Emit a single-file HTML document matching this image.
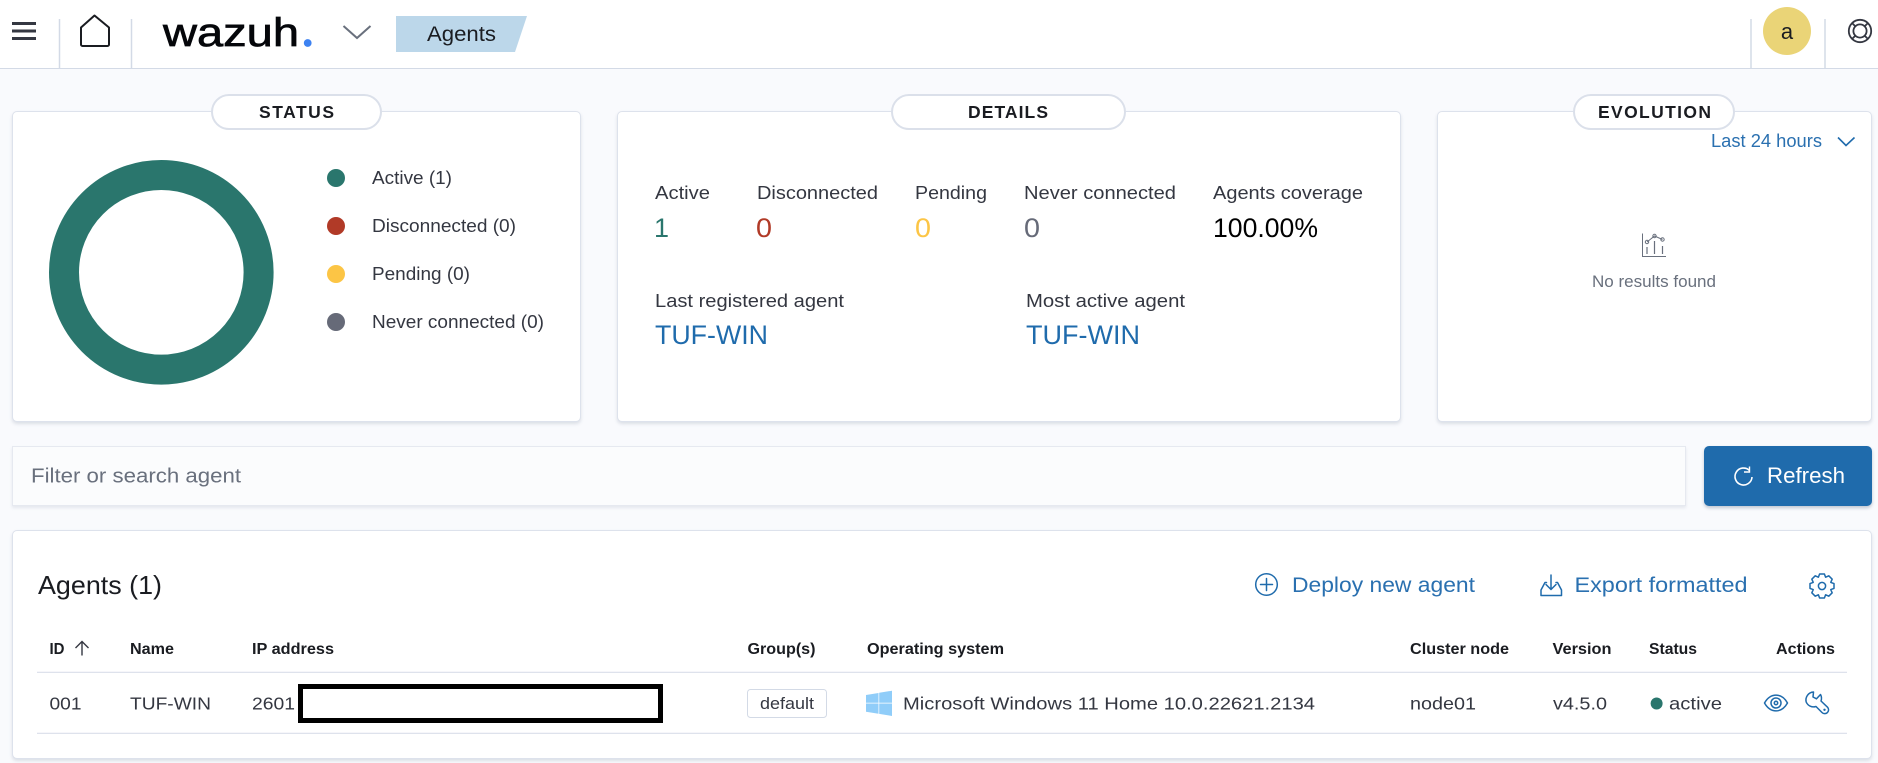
<!DOCTYPE html>
<html lang="en"><head><meta charset="utf-8"><title>Agents - Wazuh</title>
<style>
html,body{margin:0;padding:0;width:1878px;height:763px;overflow:hidden;background:#f9fafd;font-family:"Liberation Sans",sans-serif}
.hd{position:absolute;left:0;top:0;width:1878px;height:68px;background:#fff;border-bottom:1px solid #d3dae6}
.p{position:absolute;background:#fff;border:1px solid #dde2ec;border-radius:5px;box-shadow:0 2px 3px rgba(152,162,179,.3);box-sizing:border-box}
.inp{position:absolute;left:12px;top:446px;width:1674px;height:60px;background:#fbfcfd;border:1px solid #e6e9f0;box-shadow:0 2px 3px rgba(152,162,179,.2);box-sizing:border-box}
.btn{position:absolute;left:1704px;top:446px;width:168px;height:60px;background:#1f6bac;border-radius:5px;box-shadow:0 2px 3px rgba(60,80,110,.3)}
svg{position:absolute;left:0;top:0}
text{font-family:"Liberation Sans",sans-serif;fill:#343741}
.l{font-size:18.5px}
.v{font-size:27px}
.h{font-size:15.500px;font-weight:700;fill:#1a1c21}
.r{font-size:17.500px}
.t{font-size:17.500px;font-weight:700;fill:#1a1c21}
.a{font-size:21px;fill:#2a70b0}
.i{fill:none;stroke:#1f6bac;stroke-width:1.5;stroke-linecap:round;stroke-linejoin:round}
.pill{fill:#fff;stroke:#dbe0ea;stroke-width:2}
.sep{stroke:#d3dae6;stroke-width:1.5}
.ln{stroke:#d9deea;stroke-width:1.2}
</style></head><body>
<div class="hd"></div>
<div class="p" style="left:12px;top:111px;width:569px;height:311px"></div>
<div class="p" style="left:617px;top:111px;width:784px;height:311px"></div>
<div class="p" style="left:1437px;top:111px;width:435px;height:311px"></div>
<div class="inp"></div>
<div class="btn"></div>
<div class="p" style="left:12px;top:530px;width:1860px;height:229px"></div>

<svg width="1878" height="763" viewBox="0 0 1878 763">
<!-- header -->
<rect x="12" y="22" width="24" height="3" fill="#343741"/><rect x="12" y="29.5" width="24" height="3" fill="#343741"/><rect x="12" y="37" width="24" height="3" fill="#343741"/>
<line class="sep" x1="59.5" y1="19" x2="59.5" y2="68"/>
<path d="M81 27.5 94.5 15.5 109 27.5V44.5a1.5 1.5 0 0 1-1.5 1.5H82.500a1.500 1.500 0 0 1-1.500-1.500Z" fill="none" stroke="#1a1c21" stroke-width="2" stroke-linejoin="round"/>
<line class="sep" x1="131.500" y1="19" x2="131.500" y2="68"/>
<text x="163" y="46" font-size="40" textLength="136" lengthAdjust="spacingAndGlyphs" style="fill:#05060a;stroke:#05060a;stroke-width:.7">wazuh</text>
<circle cx="307.700" cy="43" r="3.900" fill="#3d82f1"/>
<path d="M343.500 26 357 38 370.500 26" fill="none" stroke="#69707d" stroke-width="2"/>
<polygon points="396,16 527,16 515,52 396,52" fill="#bcd7ea"/>
<text x="427" y="41" font-size="21" textLength="69" lengthAdjust="spacingAndGlyphs" style="fill:#1a1c21">Agents</text>
<line class="sep" x1="1751" y1="19" x2="1751" y2="68"/>
<circle cx="1787" cy="31" r="24" fill="#ead477"/>
<text x="1787" y="39" font-size="22" text-anchor="middle" style="fill:#1a1c21">a</text>
<line class="sep" x1="1825" y1="19" x2="1825" y2="68"/>
<g fill="none" stroke="#343741" stroke-width="1.800"><circle cx="1860" cy="31" r="11.200"/><circle cx="1860" cy="31" r="6.600"/><path d="M1852 23l3.300 3.300M1868 23l-3.300 3.300M1852 39l3.300-3.300M1868 39l-3.300-3.300"/></g>

<!-- status -->
<rect class="pill" x="212" y="95" width="169" height="34" rx="17"/>
<text class="t" x="259" y="118" textLength="75" lengthAdjust="spacing">STATUS</text>
<circle cx="161.300" cy="272.300" r="97.300" fill="none" stroke="#2a766d" stroke-width="30"/>
<circle cx="336" cy="178" r="9" fill="#2a766d"/><text class="l" x="372" y="184" textLength="80" lengthAdjust="spacingAndGlyphs">Active (1)</text>
<circle cx="336" cy="226" r="9" fill="#b13a27"/><text class="l" x="372" y="232" textLength="144" lengthAdjust="spacingAndGlyphs">Disconnected (0)</text>
<circle cx="336" cy="274" r="9" fill="#fcc545"/><text class="l" x="372" y="280" textLength="98" lengthAdjust="spacingAndGlyphs">Pending (0)</text>
<circle cx="336" cy="322" r="9" fill="#666a78"/><text class="l" x="372" y="328" textLength="172" lengthAdjust="spacingAndGlyphs">Never connected (0)</text>

<!-- details -->
<rect class="pill" x="892" y="95" width="233" height="34" rx="17"/>
<text class="t" x="968" y="118" textLength="80" lengthAdjust="spacing">DETAILS</text>
<text class="l" x="655" y="199" textLength="55" lengthAdjust="spacingAndGlyphs">Active</text>
<text class="l" x="757" y="199" textLength="121" lengthAdjust="spacingAndGlyphs">Disconnected</text>
<text class="l" x="915" y="199" textLength="72" lengthAdjust="spacingAndGlyphs">Pending</text>
<text class="l" x="1024" y="199" textLength="152" lengthAdjust="spacingAndGlyphs">Never connected</text>
<text class="l" x="1213" y="199" textLength="150" lengthAdjust="spacingAndGlyphs">Agents coverage</text>
<text class="v" x="654" y="237" style="fill:#2a766d">1</text>
<text class="v" x="756" y="237" style="fill:#b13a27" textLength="16" lengthAdjust="spacingAndGlyphs">0</text>
<text class="v" x="915" y="237" style="fill:#fcc545" textLength="16" lengthAdjust="spacingAndGlyphs">0</text>
<text class="v" x="1024" y="237" style="fill:#666a78" textLength="16" lengthAdjust="spacingAndGlyphs">0</text>
<text class="v" x="1213" y="237" style="fill:#000" textLength="105" lengthAdjust="spacingAndGlyphs">100.00%</text>
<text class="l" x="655" y="307" textLength="189" lengthAdjust="spacingAndGlyphs">Last registered agent</text>
<text class="l" x="1026" y="307" textLength="159" lengthAdjust="spacingAndGlyphs">Most active agent</text>
<text class="v" x="655" y="344" style="fill:#1f6bac" textLength="113" lengthAdjust="spacingAndGlyphs">TUF-WIN</text>
<text class="v" x="1026" y="344" style="fill:#1f6bac" textLength="114" lengthAdjust="spacingAndGlyphs">TUF-WIN</text>

<!-- evolution -->
<rect class="pill" x="1574" y="95" width="160" height="34" rx="17"/>
<text class="t" x="1598" y="118" textLength="113" lengthAdjust="spacing">EVOLUTION</text>
<text x="1711" y="147" font-size="18" textLength="111" lengthAdjust="spacingAndGlyphs" style="fill:#2a70b0">Last 24 hours</text>
<path d="M1838 137.500 1846 145.500 1854.500 137.500" fill="none" stroke="#1f6bac" stroke-width="1.600"/>
<g fill="none" stroke="#69707d" stroke-width="1"><path d="M1642.500 233.500V256.500H1666"/><path d="M1647 247v7M1654.500 241v13M1662.500 246v8" stroke-width="1.200"/><path d="M1647 242 1654.500 236 1662.500 239.500"/><circle cx="1647" cy="242" r="1.700"/><circle cx="1654.500" cy="236" r="1.700"/><circle cx="1662.500" cy="239.500" r="1.700"/></g>
<text x="1592" y="287" font-size="16.500" textLength="124" lengthAdjust="spacingAndGlyphs" style="fill:#69707d">No results found</text>

<!-- search -->
<text x="31" y="482.500" font-size="20" textLength="210" lengthAdjust="spacingAndGlyphs" style="fill:#69707d">Filter or search agent</text>
<path d="M1749.500 470.500A8.500 8.500 0 1 0 1752 477" fill="none" stroke="#fff" stroke-width="1.600"/><path d="M1749.500 466.500V472H1744" fill="none" stroke="#fff" stroke-width="1.400"/>
<text x="1767" y="483" font-size="22" textLength="78" lengthAdjust="spacingAndGlyphs" style="fill:#fff">Refresh</text>

<!-- table head -->
<text x="38" y="594" font-size="26" textLength="124" lengthAdjust="spacingAndGlyphs" style="fill:#1a1c21">Agents (1)</text>
<circle class="i" cx="1266.500" cy="584.500" r="10.800"/><path class="i" d="M1266.500 578.500v12M1260.500 584.500h12"/>
<text class="a" x="1292" y="592" textLength="183" lengthAdjust="spacingAndGlyphs">Deploy new agent</text>
<path class="i" d="M1546.500 582.500H1545L1541 590v5.500H1561.500V590L1557.500 582.500H1556M1551 575V589.500M1546 584.500 1551 589.500 1556 584.500"/>
<text class="a" x="1574.500" y="592" textLength="173" lengthAdjust="spacingAndGlyphs">Export formatted</text>
<g transform="translate(1822 586)"><polygon class="i" points="-3.600,-8.800 -2.400,-12 2.400,-12 3.600,-8.800 3.680,-8.770 6.790,-10.180 10.180,-6.790 8.770,-3.680 8.800,-3.600 12,-2.400 12,2.400 8.800,3.600 8.770,3.680 10.180,6.790 6.790,10.180 3.680,8.770 3.600,8.800 2.400,12 -2.400,12 -3.600,8.800 -3.680,8.770 -6.790,10.180 -10.180,6.790 -8.770,3.680 -8.800,3.600 -12,2.400 -12,-2.400 -8.800,-3.600 -8.770,-3.680 -10.180,-6.790 -6.790,-10.180 -3.680,-8.770"/><circle class="i" r="3.600"/></g>

<text class="h" x="49.500" y="654" textLength="15" lengthAdjust="spacingAndGlyphs">ID</text>
<path d="M82 655.500V641.500M75.500 648 82 641.500 88.500 648" fill="none" stroke="#343741" stroke-width="1.400"/>
<text class="h" x="130" y="654" textLength="44" lengthAdjust="spacingAndGlyphs">Name</text>
<text class="h" x="252" y="654" textLength="82" lengthAdjust="spacingAndGlyphs">IP address</text>
<text class="h" x="747.500" y="654" textLength="68" lengthAdjust="spacingAndGlyphs">Group(s)</text>
<text class="h" x="867" y="654" textLength="137" lengthAdjust="spacingAndGlyphs">Operating system</text>
<text class="h" x="1410" y="654" textLength="99" lengthAdjust="spacingAndGlyphs">Cluster node</text>
<text class="h" x="1552.500" y="654" textLength="59" lengthAdjust="spacingAndGlyphs">Version</text>
<text class="h" x="1649" y="654" textLength="48" lengthAdjust="spacingAndGlyphs">Status</text>
<text class="h" x="1776" y="654" textLength="59" lengthAdjust="spacingAndGlyphs">Actions</text>
<line class="ln" x1="37" y1="672.300" x2="1847" y2="672.300"/>
<line class="ln" x1="37" y1="733.300" x2="1847" y2="733.300"/>

<!-- row -->
<text class="r" x="49.500" y="709.500" textLength="32" lengthAdjust="spacingAndGlyphs">001</text>
<text class="r" x="130" y="709.500" textLength="81" lengthAdjust="spacingAndGlyphs">TUF-WIN</text>
<text class="r" x="252" y="709.500" textLength="43" lengthAdjust="spacingAndGlyphs">2601</text>
<rect x="300.500" y="686.500" width="360" height="34" fill="#fff" stroke="#000" stroke-width="5"/>
<rect x="747.500" y="689.500" width="79" height="28" rx="3" fill="#fff" stroke="#d3dae6" stroke-width="1"/>
<text x="760" y="709" font-size="16.500" textLength="54" lengthAdjust="spacingAndGlyphs">default</text>
<g fill="#90cdf9"><polygon points="866,695 878.500,693 878.500,702.800 866,702.800"/><polygon points="879.200,692.800 892,690.700 892,702.800 879.200,702.800"/><polygon points="866,703.500 878.500,703.500 878.500,713.800 866,711.800"/><polygon points="879.200,703.500 892,703.500 892,716 879.200,713.900"/></g>
<text class="r" x="903" y="709.500" textLength="412" lengthAdjust="spacingAndGlyphs">Microsoft Windows 11 Home 10.0.22621.2134</text>
<text class="r" x="1410" y="709.500" textLength="66" lengthAdjust="spacingAndGlyphs">node01</text>
<text class="r" x="1553" y="709.500" textLength="54" lengthAdjust="spacingAndGlyphs">v4.5.0</text>
<circle cx="1656.600" cy="703.500" r="6" fill="#2a766d"/>
<text class="r" x="1669" y="709.500" textLength="53" lengthAdjust="spacingAndGlyphs">active</text>
<path class="i" d="M1764.500 703C1770.500 692.500 1781.500 692.500 1787.500 703 1781.500 713.500 1770.500 713.500 1764.500 703Z"/><circle class="i" cx="1776" cy="703" r="5"/><circle class="i" cx="1776" cy="703" r="1.700"/>
<path class="i" d="M1813.500 692A8 8 0 0 0 1806.200 702 8 8 0 0 0 1816 706.500L1822 712.500A3.800 3.800 0 0 0 1827.500 707.200L1821 701A8 8 0 0 0 1820.500 694.500L1816.500 698.800 1813 697Z"/>
<circle cx="1824.500" cy="709.800" r="1.200" fill="#1f6bac"/>
</svg>
</body></html>
